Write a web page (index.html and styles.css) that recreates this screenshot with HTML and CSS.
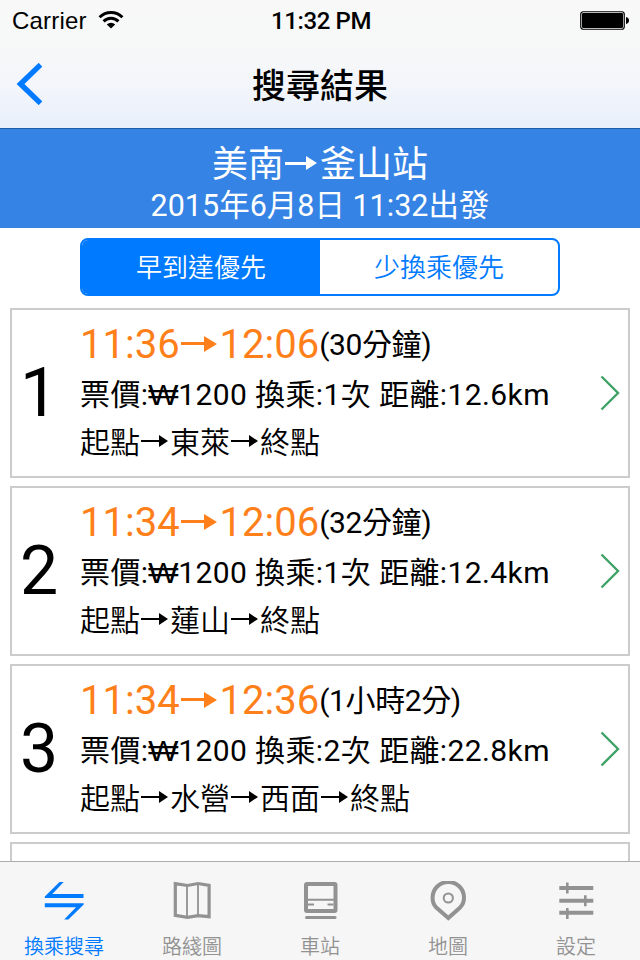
FILE: index.html
```html
<!DOCTYPE html>
<html lang="zh-Hant">
<head>
    <meta charset="UTF-8">
    <meta name="viewport" content="width=device-width, initial-scale=1.0">
    <title>搜尋結果</title>
    <link rel="stylesheet" href="styles.css">
</head>
<body>

    <header class="header">
        <div class="status">
            <div class="carrier">
                <span>Carrier</span>
                <svg class="wifi" width="26" height="20" viewBox="0 0 26 20">
                    <g fill="none" stroke="#000" stroke-width="3">
                        <path d="M1.600 7.200a16 16 0 0 1 22.800 0"/>
                        <path d="M5.600 11.400a10.400 10.400 0 0 1 14.800 0"/>
                    </g>
                    <path d="M13 18.600l-4.200-4.200a6 6 0 0 1 8.400 0z"/>
                </svg>
            </div>
            <span class="clock">11:32 PM</span>
            <svg class="battery" width="50" height="20" viewBox="0 0 50 20">
                <rect x="0.75" y="0.75" width="43.5" height="17.5" rx="2.5" fill="none" stroke="#000" stroke-width="1.2"/>
                <rect x="2" y="2" width="41" height="15" rx="1.2"/>
                <path d="M46 6q3 .6 3 3.500t-3 3.500z"/>
            </svg>
        </div>
        <div class="navbar">
            <svg class="back" width="26" height="42" viewBox="0 0 26 42">
                <path d="M24.500 1.800L4.500 21l20 19.200" fill="none" stroke="#007aff" stroke-width="5.400"/>
            </svg>
            <h1>搜尋結果</h1>
        </div>
    </header>

    <section class="summary">
        <h2>美南<i class="arrow">→</i>釜山站</h2>
        <p>2015年6月8日 11:32出發</p>
    </section>

    <main class="content">
        <div class="segment">
            <span class="active">早到達優先</span>
            <span>少換乘優先</span>
        </div>

        <div class="route">
            <div class="no">1</div>
            <div class="info">
                <div class="time"><b>11:36<i class="arrow">→</i>12:06</b><span>(30分鐘)</span></div>
                <div class="fare">票價:<i class="won">₩</i>1200 換乘:1次 距離:12.6km</div>
                <div class="path">起點<i class="arrow">→</i>東萊<i class="arrow">→</i>終點</div>
            </div>
            <svg class="more" width="20" height="36" viewBox="0 0 20 36"><path d="M1.500 1.500L18 18 1.500 34.500"/></svg>
        </div>

        <div class="route">
            <div class="no">2</div>
            <div class="info">
                <div class="time"><b>11:34<i class="arrow">→</i>12:06</b><span>(32分鐘)</span></div>
                <div class="fare">票價:<i class="won">₩</i>1200 換乘:1次 距離:12.4km</div>
                <div class="path">起點<i class="arrow">→</i>蓮山<i class="arrow">→</i>終點</div>
            </div>
            <svg class="more" width="20" height="36" viewBox="0 0 20 36"><path d="M1.500 1.500L18 18 1.500 34.500"/></svg>
        </div>

        <div class="route">
            <div class="no">3</div>
            <div class="info">
                <div class="time"><b>11:34<i class="arrow">→</i>12:36</b><span>(1小時2分)</span></div>
                <div class="fare">票價:<i class="won">₩</i>1200 換乘:2次 距離:22.8km</div>
                <div class="path">起點<i class="arrow">→</i>水營<i class="arrow">→</i>西面<i class="arrow">→</i>終點</div>
            </div>
            <svg class="more" width="20" height="36" viewBox="0 0 20 36"><path d="M1.500 1.500L18 18 1.500 34.500"/></svg>
        </div>

        <div class="route"></div>
    </main>

    <nav class="tabbar">
        <div class="tab active">
            <svg width="40" height="40" viewBox="0 0 40 40" fill="currentColor">
                <path d="M15.500 1h4.200L8.300 13H39.500v4H.8v-1.500zM.8 22.200h38.900v1.300L24.400 38.500h-4.200L32 26.200H.8z"/>
            </svg>
            <span>換乘搜尋</span>
        </div>
        <div class="tab">
            <svg width="40" height="40" viewBox="0 0 40 40" fill="none" stroke="currentColor">
                <path d="M3.300 2.700l12.200 1.800 10.600-2 11 1.800v31.400l-11-1-10.600 1.600-12.200-2z" stroke-width="3.200"/>
                <path d="M15 4v32M26 3v32" stroke-width="1.800"/>
            </svg>
            <span>路綫圖</span>
        </div>
        <div class="tab">
            <svg width="40" height="40" viewBox="0 0 40 40" fill="none" stroke="currentColor">
                <rect x="6" y="3" width="29.500" height="27" rx="1" stroke-width="4"/>
                <path d="M8 18.800h26M8 23.500h6M27.500 23.500h6" stroke-width="1.900"/>
                <path d="M6.500 36.500h28.500" stroke-width="3" stroke-linecap="round"/>
            </svg>
            <span>車站</span>
        </div>
        <div class="tab">
            <svg width="40" height="40" viewBox="0 0 40 40" fill="none" stroke="currentColor">
                <path d="M20.300 37L8 26.200C4.500 22.500 4.600 16.600 4.600 16.600a15.700 15.700 0 0 1 31.400 0c0 3.600-1.300 7.200-3.600 9.600z" stroke-width="4"/>
                <circle cx="20.300" cy="17" r="4.600" stroke-width="2"/>
            </svg>
            <span>地圖</span>
        </div>
        <div class="tab">
            <svg width="40" height="40" viewBox="0 0 40 40" fill="none" stroke="currentColor">
                <path d="M3.300 7h34M3.300 19.700h34M3.300 31.700h34" stroke-width="4"/>
                <path d="M11.300 1.500v11M29.300 14.200v11M11.300 27v11" stroke-width="2.600"/>
            </svg>
            <span>設定</span>
        </div>
    </nav>

</body>
</html>
```
FILE: styles.css
```css
* {
    box-sizing: border-box;
}

body {
    margin: 0;
    width: 640px;
    height: 960px;
    overflow: hidden;
    display: flex;
    flex-direction: column;
    background: #fff;
    color: #000;
    font-family: Roboto, "Noto Sans CJK TC", sans-serif;
    font-weight: 350;
}

h1, h2, p {
    margin: 0;
}

svg {
    display: block;
    flex: none;
}

.header {
    height: 129px;
    background: linear-gradient(#f8f8f8 0, #f7f8f8 45px, #f2f5fa 90px, #e8effb 128px);
    border-bottom: 1px solid #1f5ca8;
}

.status {
    display: grid;
    grid-template-columns: 1fr auto 1fr;
    align-items: center;
    height: 42px;
    padding: 0 10px 0 12px;
    font-family: "Liberation Sans", sans-serif;
    font-size: 24px;
}

.carrier {
    display: flex;
    gap: 11px;
    letter-spacing: 0.2px;
}

.wifi {
    margin-top: 3px;
}

.clock {
    font-family: Roboto, sans-serif;
    font-size: 24px;
    font-weight: 500;
    letter-spacing: -0.4px;
}

.battery {
    justify-self: end;
}

.navbar {
    display: grid;
    grid-template-columns: 26px 1fr 26px;
    align-items: center;
    height: 84px;
    padding: 0 16px;
}

.navbar h1 {
    padding-top: 4px;
    text-align: center;
    font-size: 34px;
    font-weight: 500;
    line-height: 44px;
}

.summary {
    height: 99px;
    padding-top: 14px;
    background: #3583e4;
    color: #fff;
    text-align: center;
}

.summary h2 {
    font-size: 36px;
    font-weight: 400;
    line-height: 44px;
}

.summary p {
    margin-top: -1px;
    font-size: 30.5px;
    line-height: 38px;
}

/* long shaft and solid head drawn over the plain glyph */
.arrow {
    display: inline-block;
    position: relative;
    width: 1em;
    height: 1em;
    line-height: 1;
    vertical-align: -0.14em;
    font-style: normal;
    -webkit-text-fill-color: transparent;
}

.arrow::before {
    content: "";
    position: absolute;
    top: 0.285em;
    left: 0.04em;
    width: 0.6em;
    height: 0.07em;
    background: currentColor;
}

.arrow::after {
    content: "";
    position: absolute;
    top: 0.12em;
    right: 0.07em;
    border-left: 0.33em solid currentColor;
    border-top: 0.2em solid transparent;
    border-bottom: 0.2em solid transparent;
}

.won {
    display: inline-block;
    padding-left: 1px;
    font-family: "Liberation Sans", sans-serif;
    font-style: normal;
    line-height: 1;
    transform: scaleX(1.08);
}

.content {
    flex: 1;
    min-height: 0;
    overflow: hidden;
    padding: 10px 10px 0;
}

.segment {
    display: flex;
    width: 480px;
    height: 58px;
    margin: 0 auto 12px;
    border: 2px solid #007aff;
    border-radius: 8px;
    overflow: hidden;
    color: #007aff;
    font-size: 26px;
    line-height: 56px;
    text-align: center;
}

.segment span {
    flex: 1;
}

.segment .active {
    background: #007aff;
    color: #fff;
}

.route {
    display: flex;
    align-items: center;
    height: 170px;
    margin-bottom: 8px;
    padding-right: 8px;
    border: 2px solid #ccc;
}

.no {
    width: 54px;
    text-align: center;
    font-size: 68px;
    font-weight: 400;
}

.info {
    flex: 1;
    padding-left: 14px;
    font-size: 30px;
    line-height: 48px;
    white-space: nowrap;
}

.time {
    display: flex;
    align-items: center;
    height: 51px;
}

.time b {
    padding-top: 2px;
    color: #ff7f1b;
    font-size: 40px;
    font-weight: 400;
}

.time span {
    letter-spacing: -0.4px;
}

.time span,
.fare,
.summary p {
    font-weight: 380;
}

.fare {
    letter-spacing: 0.4px;
}

.more path {
    fill: none;
    stroke: #3fa266;
    stroke-width: 2.4;
}

.tabbar {
    display: flex;
    height: 99px;
    border-top: 1px solid #acacac;
    background: #f6f6f6;
    color: #929292;
}

.tab {
    flex: 1;
    display: flex;
    flex-direction: column;
    align-items: center;
    padding-top: 19px;
    font-size: 20px;
    line-height: 28px;
}

.tab span {
    margin-top: 12px;
}

.tab.active {
    color: #007aff;
}
```
